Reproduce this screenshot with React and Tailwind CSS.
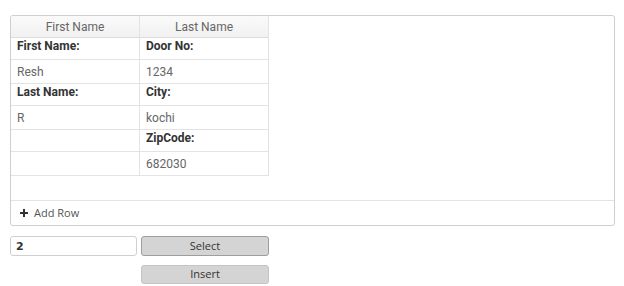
import { useState } from 'react';

const rows = [
  { a: 'First Name:', b: 'Door No:', label: true },
  { a: 'Resh', b: '1234' },
  { a: 'Last Name:', b: 'City:', label: true },
  { a: 'R', b: 'kochi' },
  { a: '', b: 'ZipCode:', label: true },
  { a: '', b: '682030' },
];

export default function App() {
  const [value, setValue] = useState('2');

  return (
    <div className="w-[624px] h-[286px] bg-white pt-[15px] pl-[10px] font-['Roboto',sans-serif]">
      {/* GRID */}
      <div className="w-[605px] h-[211px] border border-[#cfcfcf] rounded-[3px] flex flex-col overflow-hidden">
        <div className="flex-1">
          <div className="w-[258px] border-r border-[#e3e3e3] border-b">
            <div className="flex h-[22px] bg-gradient-to-b from-[#fafafa] to-[#f1f1f1] border-b border-[#dcdcdc] text-[12px] text-[#666]">
              <div className="w-[129px] border-r border-[#e3e3e3] flex items-center justify-center">First Name</div>
              <div className="flex-1 flex items-center justify-center">Last Name</div>
            </div>
            {rows.map((r, i) => (
              <div
                key={i}
                className={
                  r.label
                    ? 'flex h-[22px] border-b border-[#e3e3e3] text-[12px] leading-[14px] font-bold text-[#333]'
                    : 'flex h-[24px] border-b border-[#e3e3e3] last:border-b-0 last:h-[23px] text-[12px] text-[#666]'
                }
              >
                <div className={r.label ? 'w-[129px] border-r border-[#e3e3e3] px-[6px] pt-[1px]' : 'w-[129px] border-r border-[#e3e3e3] px-[6px] flex items-center'}>{r.a}</div>
                <div className={r.label ? 'flex-1 px-[6px] pt-[1px]' : 'flex-1 px-[6px] flex items-center'}>{r.b}</div>
              </div>
            ))}
          </div>
        </div>
        <div className="h-[25px] border-t border-[#e3e3e3] flex items-center pl-[9px] gap-[6px] text-[11px] text-[#555] font-['Open_Sans',sans-serif]">
          <svg width="8" height="8" viewBox="0 0 8 8"><path d="M3 0h2v3h3v2H5v3H3V5H0V3h3z" fill="#333" /></svg>
          <span>Add Row</span>
        </div>
      </div>

      {/* CONTROLS */}
      <div className="flex gap-[4px] mt-[10px] w-[259px]">
        <input
          value={value}
          onChange={e => setValue(e.target.value)}
          className="w-[127px] h-[20px] border border-[#cfcfcf] rounded-[3px] px-[5px] text-[11px] font-bold text-[#333] font-['DejaVu_Sans',sans-serif] outline-none"
        />
        <button className="flex-1 h-[20px] bg-[#d4d4d4] border border-[#9e9e9e] rounded-[3px] text-[11px] text-[#333] font-['Open_Sans',sans-serif]">Select</button>
      </div>
      <div className="flex mt-[9px] pl-[131px] w-[259px]">
        <button className="flex-1 h-[19px] bg-[#d4d4d4] border border-[#c4c4c4] rounded-[3px] text-[11px] text-[#333] font-['Open_Sans',sans-serif]">Insert</button>
      </div>
    </div>
  );
}
